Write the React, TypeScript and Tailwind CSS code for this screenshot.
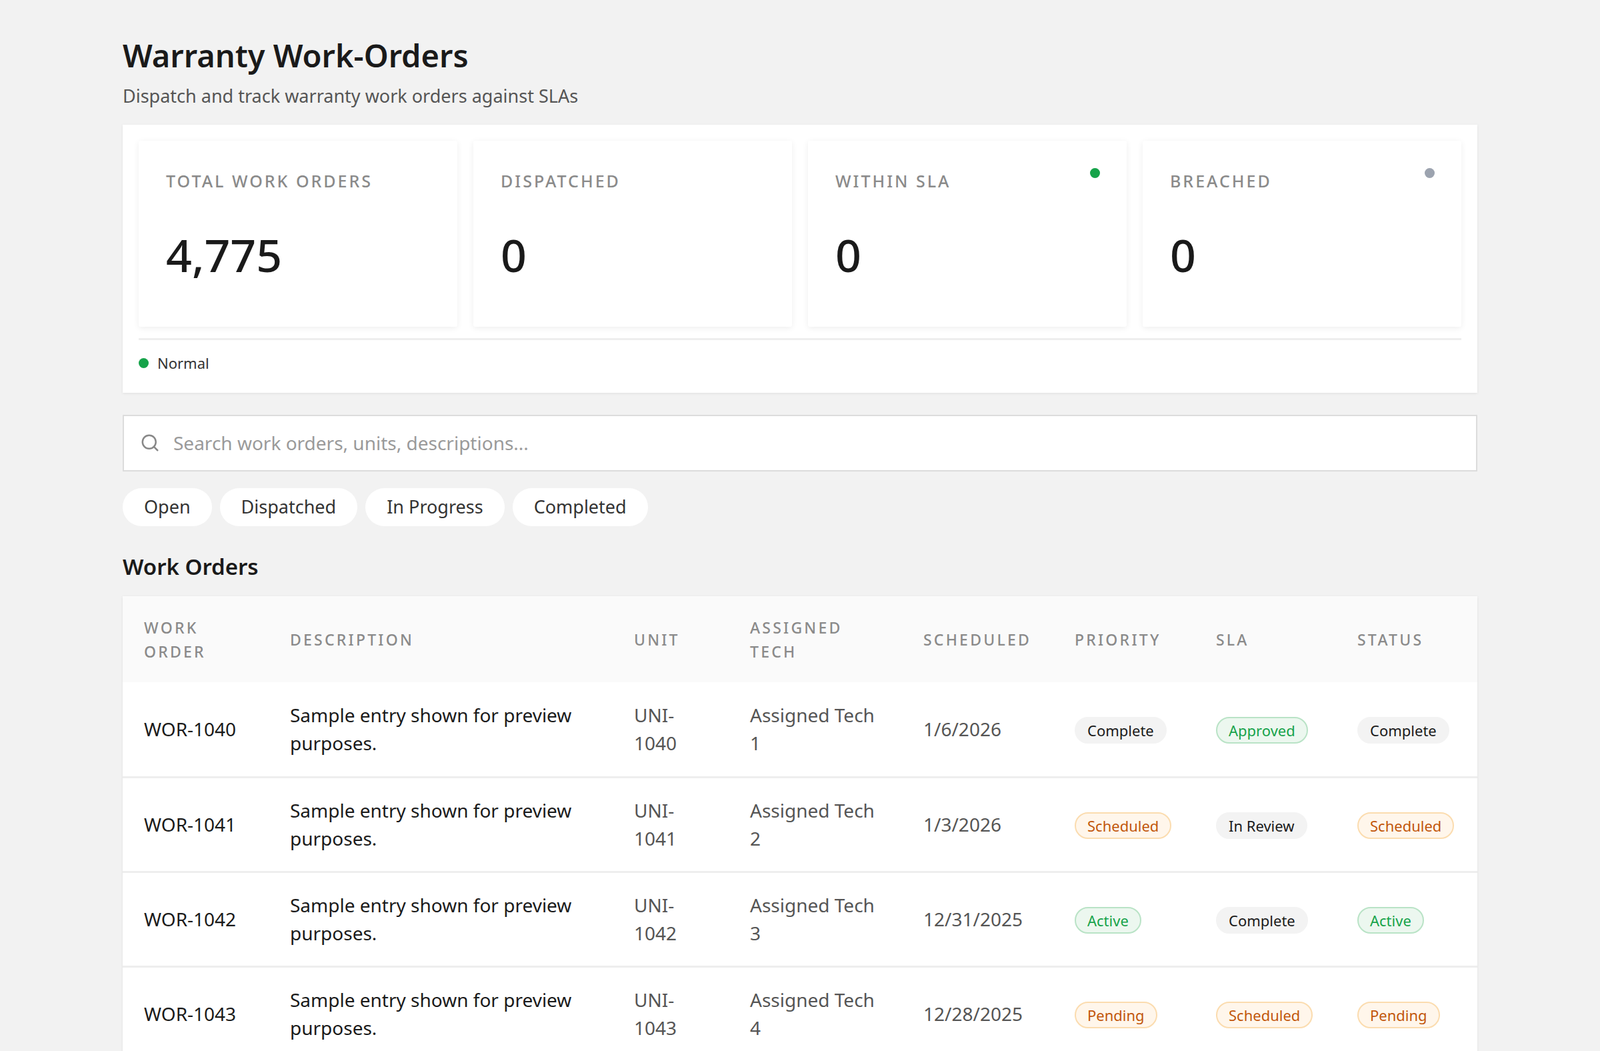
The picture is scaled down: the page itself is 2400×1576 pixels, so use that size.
import { Search } from "lucide-react"

type Tone = "gray" | "green" | "orange"

interface Row {
  id: string
  unit: string
  tech: string
  scheduled: string
  priority: [string, Tone]
  sla: [string, Tone]
  status: [string, Tone]
}

const rows: Row[] = [
  { id: "WOR-1040", unit: "1040", tech: "1", scheduled: "1/6/2026", priority: ["Complete", "gray"], sla: ["Approved", "green"], status: ["Complete", "gray"] },
  { id: "WOR-1041", unit: "1041", tech: "2", scheduled: "1/3/2026", priority: ["Scheduled", "orange"], sla: ["In Review", "gray"], status: ["Scheduled", "orange"] },
  { id: "WOR-1042", unit: "1042", tech: "3", scheduled: "12/31/2025", priority: ["Active", "green"], sla: ["Complete", "gray"], status: ["Active", "green"] },
  { id: "WOR-1043", unit: "1043", tech: "4", scheduled: "12/28/2025", priority: ["Pending", "orange"], sla: ["Scheduled", "orange"], status: ["Pending", "orange"] },
]

const toneClass: Record<Tone, string> = {
  gray: "bg-[#f3f3f3] border-[#f3f3f3] text-[#1a1a1a]",
  green: "bg-[#ecf7ef] border-[#b9e3c6] text-[#16a34a]",
  orange: "bg-[#fff6eb] border-[#fbdcaf] text-[#c2570c]",
}

function Badge({ value }: { value: [string, Tone] }) {
  return (
    <span className={`inline-flex items-center h-[40px] px-[17px] rounded-full border-2 text-[22px] ${toneClass[value[1]]}`}>
      {value[0]}
    </span>
  )
}

const stats = [
  { label: "TOTAL WORK ORDERS", value: "4,775", dot: "" },
  { label: "DISPATCHED", value: "0", dot: "" },
  { label: "WITHIN SLA", value: "0", dot: "bg-[#16a34a]" },
  { label: "BREACHED", value: "0", dot: "bg-[#9ca3af]" },
]

const headers = [
  ["WORK", "ORDER"],
  ["DESCRIPTION"],
  ["UNIT"],
  ["ASSIGNED", "TECH"],
  ["SCHEDULED"],
  ["PRIORITY"],
  ["SLA"],
  ["STATUS"],
]

const widths = ["w-[219px]", "w-[516px]", "w-[174px]", "w-[260px]", "w-[227px]", "w-[212px]", "w-[212px]", ""]

export default function App() {
  return (
    <div className="min-h-screen bg-[#f2f2f2] font-['Inter',sans-serif] text-[#1a1a1a]">
      <div className="px-[184px] pt-[52px] pb-10">
        <h1 className="text-[47px] font-semibold leading-[62px]">Warranty Work-Orders</h1>
        <p className="mt-[10px] text-[27px] text-[#555]">Dispatch and track warranty work orders against SLAs</p>

        <div className="mt-[22px] bg-white shadow-[0_1px_4px_rgba(0,0,0,0.08)] px-[24px] pt-[24px] pb-[28px]">
          <div className="grid grid-cols-4 gap-[24px]">
            {stats.map((s) => (
              <div key={s.label} className="relative h-[279px] rounded-[3px] bg-white shadow-[0_2px_10px_rgba(0,0,0,0.07)] px-[41px] pt-[42px]">
                {s.dot && <span className={`absolute right-[40px] top-[41px] w-[15px] h-[15px] rounded-full ${s.dot}`} />}
                <div className="text-[25px] font-medium tracking-[0.12em] text-[#8a8a8a]">{s.label}</div>
                <div className="mt-[58px] text-[68px] font-medium leading-none">{s.value}</div>
              </div>
            ))}
          </div>
          <div className="mt-[17px] border-t-[3px] border-[#eeeeee] pt-[18px] flex items-center gap-[13px]">
            <span className="w-[15px] h-[15px] rounded-full bg-[#16a34a]" />
            <span className="text-[22px] text-[#333]">Normal</span>
          </div>
        </div>

        <div className="mt-[33px] h-[85px] bg-white border-2 border-[#dcdcdc] flex items-center px-[24px] gap-[20px]">
          <Search className="w-[30px] h-[30px] text-[#888]" strokeWidth={2} />
          <span className="text-[28px] text-[#9a9a9a]">Search work orders, units, descriptions...</span>
        </div>

        <div className="mt-[25px] flex gap-[12px]">
          {["Open", "Dispatched", "In Progress", "Completed"].map((p) => (
            <span key={p} className="h-[57px] px-[32px] rounded-full bg-white flex items-center text-[27px] text-[#333]">{p}</span>
          ))}
        </div>

        <h2 className="mt-[36px] text-[33px] font-semibold">Work Orders</h2>

        <div className="mt-[20px] bg-white shadow-[0_1px_4px_rgba(0,0,0,0.08)]">
          <table className="w-full table-fixed border-collapse">
            <thead>
              <tr className="bg-[#fafafa] h-[129px]">
                {headers.map((h, i) => (
                  <th key={i} className={`${widths[i]} pl-[32px] text-left align-middle text-[23px] font-medium tracking-[0.14em] text-[#8a8a8a] leading-[36px]`}>
                    {h.map((l) => (
                      <div key={l}>{l}</div>
                    ))}
                  </th>
                ))}
              </tr>
            </thead>
            <tbody>
              {rows.map((r) => (
                <tr key={r.id} className="h-[142px] border-b-[3px] border-[#eeeeee] text-[28px] leading-[42px]">
                  <td className="pl-[32px]">{r.id}</td>
                  <td className="pl-[32px] pr-[20px]">Sample entry shown for preview purposes.</td>
                  <td className="pl-[32px] text-[#555]">UNI-<br />{r.unit}</td>
                  <td className="pl-[32px] text-[#555]">Assigned Tech<br />{r.tech}</td>
                  <td className="pl-[32px] text-[#555]">{r.scheduled}</td>
                  <td className="pl-[32px]"><Badge value={r.priority} /></td>
                  <td className="pl-[32px]"><Badge value={r.sla} /></td>
                  <td className="pl-[32px]"><Badge value={r.status} /></td>
                </tr>
              ))}
            </tbody>
          </table>
        </div>
      </div>
    </div>
  )
}
